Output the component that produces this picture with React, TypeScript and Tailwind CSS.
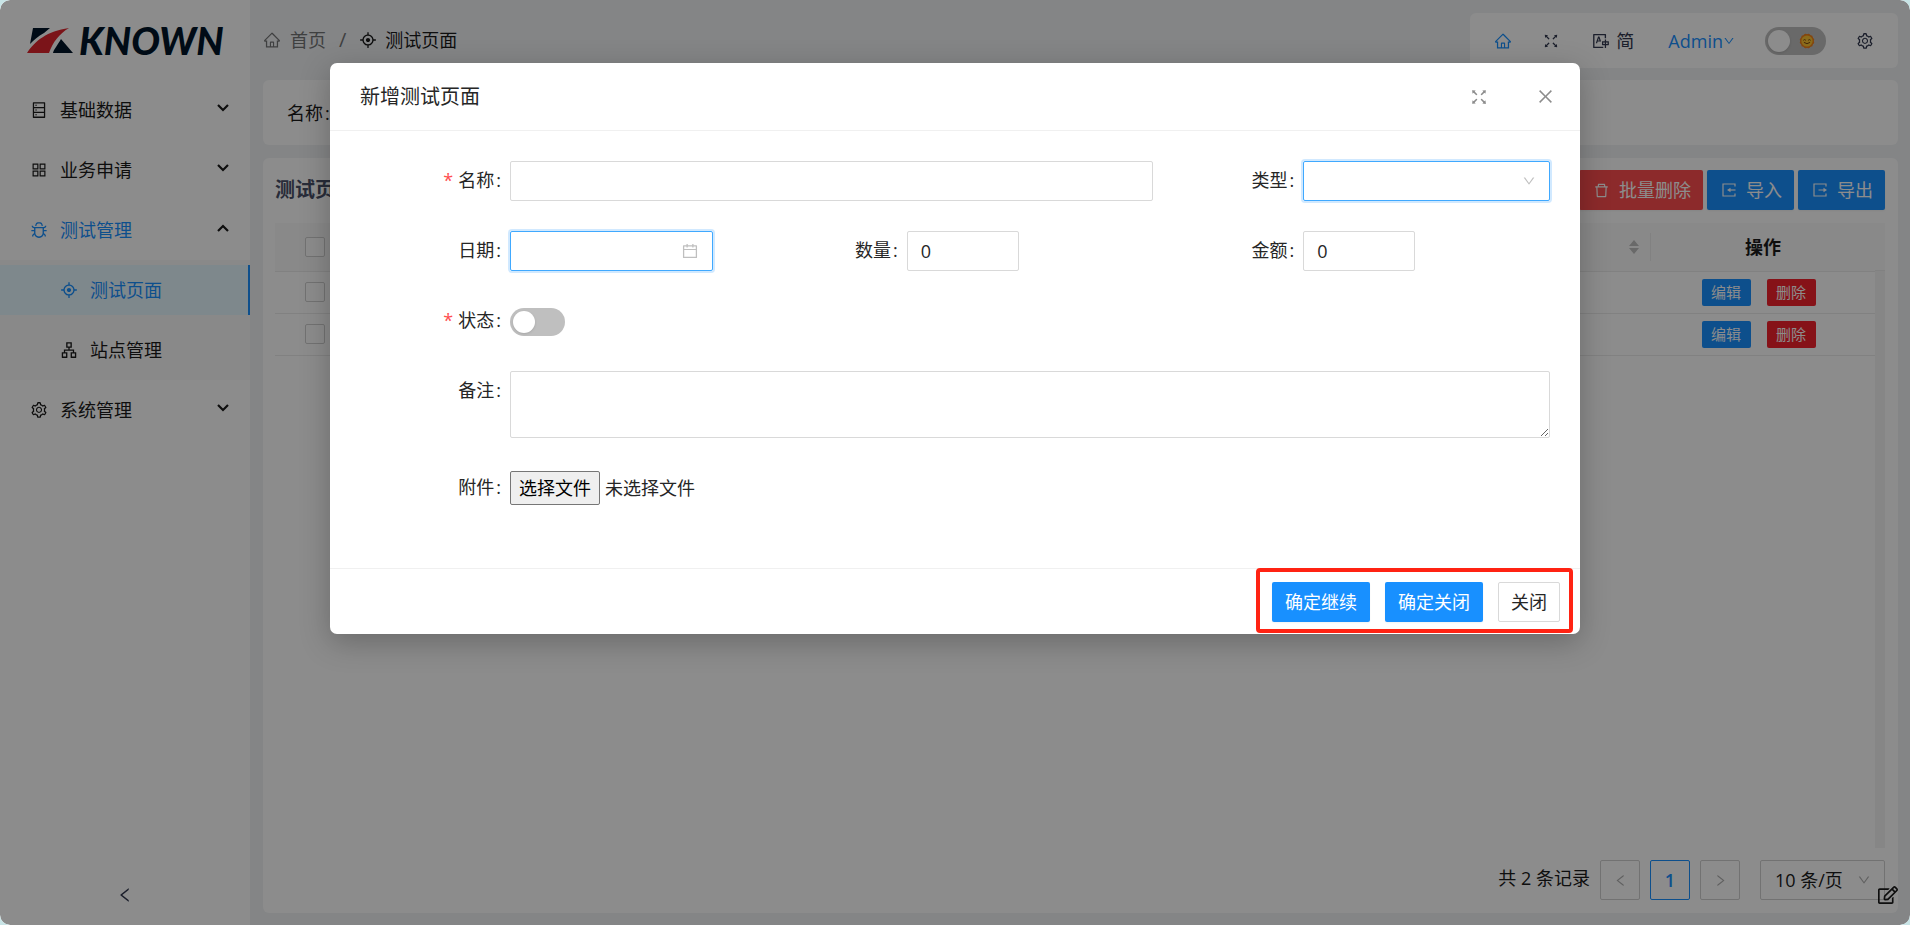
import type { ReactNode } from "react";
import {
  AiOutlineAim,
  AiOutlineApartment,
  AiOutlineAppstore,
  AiOutlineBug,
  AiOutlineCalendar,
  AiOutlineClose,
  AiOutlineDatabase,
  AiOutlineDelete,
  AiOutlineDown,
  AiOutlineFullscreen,
  AiOutlineHome,
  AiOutlineLeft,
  AiOutlineRight,
  AiOutlineSetting,
  AiOutlineTranslation,
} from "react-icons/ai";
import { FaRegEdit } from "react-icons/fa";

function Logo() {
  return (
    <a href="#" className="flex h-20 items-center gap-[6px] pl-[27px] text-[#001529]" aria-label="KNOWN">
      <svg width="46" height="27" viewBox="0 0 46 27" aria-hidden="true">
        <path d="M6 1H23L17 6C11 9 7 13 3 17Z" fill="#001529" />
        <path d="M0 26C8 14 20 4 42 1C32 7 26 15 22 26Z" fill="#e0262e" />
        <path d="M34 12L46 26H26C27 22 30 19 34 12Z" fill="#001529" />
      </svg>
      <span className="font-['Lato'] text-[38px] leading-10 font-black italic">KNOWN</span>
    </a>
  );
}

function Chevron({ up = false }: { up?: boolean }) {
  return (
    <svg className="ml-auto mb-1" width="12" height="8" viewBox="0 0 12 8" fill="none" stroke="currentColor" strokeWidth="2.2" aria-hidden="true">
      <path d={up ? "M1 7L6 2L11 7" : "M1 1L6 6L11 1"} />
    </svg>
  );
}

function TransferIcon({ out = false }: { out?: boolean }) {
  return (
    <svg width="16" height="16" viewBox="0 0 16 16" fill="none" stroke="currentColor" strokeWidth="1.2" aria-hidden="true">
      <path d="M14 4.5V2H2V14H14V11.5" />
      <path d={out ? "M6.5 8H13" : "M8 8H14.5"} />
      <path d={out ? "M11.5 5.8L15 8L11.5 10.2Z" : "M9.5 5.8L6 8L9.5 10.2Z"} fill="currentColor" stroke="none" />
    </svg>
  );
}

function MenuGroup({ icon, label, open = false }: { icon: ReactNode; label: string; open?: boolean }) {
  return (
    <button type="button" className="flex h-[60px] w-full items-center pr-[21px] pl-[30px] text-[#1a1a1a]">
      <span className={open ? "flex items-center gap-3 text-[#1890ff]" : "flex items-center gap-3"}>
        {icon}
        {label}
      </span>
      <Chevron up={open} />
    </button>
  );
}

function Sidebar() {
  return (
    <nav className="flex w-[250px] shrink-0 flex-col bg-white">
      <Logo />
      <MenuGroup icon={<AiOutlineDatabase size={18} />} label="基础数据" />
      <MenuGroup icon={<AiOutlineAppstore size={18} />} label="业务申请" />
      <MenuGroup icon={<AiOutlineBug size={18} />} label="测试管理" open />
      <div className="bg-[#fafafa] py-[5px]">
        <a href="#" className="flex h-[50px] items-center gap-3 border-r-2 border-[#1890ff] bg-[#e6f7ff] pl-[60px] text-[#1890ff]">
          <AiOutlineAim size={18} />
          测试页面
        </a>
        <a href="#" className="mt-[10px] flex h-[50px] items-center gap-3 pl-[60px] text-[#1a1a1a]">
          <AiOutlineApartment size={18} />
          站点管理
        </a>
      </div>
      <MenuGroup icon={<AiOutlineSetting size={18} />} label="系统管理" />
      <button type="button" aria-label="收起菜单" className="mt-auto flex h-[60px] items-center justify-center text-[#333a50]">
        <AiOutlineLeft size={18} />
      </button>
    </nav>
  );
}

function SunFace() {
  return (
    <svg width="16" height="16" viewBox="0 0 16 16" aria-hidden="true">
      <g fill="#f0801a">
        <rect x="2.2" y="2.2" width="11.6" height="11.6" rx="2" />
        <rect x="2.2" y="2.2" width="11.6" height="11.6" rx="2" transform="rotate(30 8 8)" />
        <rect x="2.2" y="2.2" width="11.6" height="11.6" rx="2" transform="rotate(60 8 8)" />
      </g>
      <circle cx="8" cy="8" r="5.6" fill="#fcc332" />
      <g fill="none" stroke="#7a4a12" strokeWidth="1" strokeLinecap="round">
        <path d="M4.6 7Q5.6 5.8 6.6 7M9.4 7Q10.4 5.8 11.4 7M5.2 9.6Q8 12 10.8 9.6" />
      </g>
    </svg>
  );
}

function TopBar() {
  return (
    <header className="flex h-[55px] items-center justify-between">
      <ol className="flex items-center pb-[2px]" aria-label="导航">
        <li className="flex items-center gap-[9px] text-[#747576]">
          <AiOutlineHome size={18} />
          首页
        </li>
        <li className="px-[13px] text-xl leading-6 text-[#747576]" aria-hidden="true">
          /
        </li>
        <li className="flex items-center gap-2 text-[#1a1a1a]">
          <AiOutlineAim size={18} />
          测试页面
        </li>
      </ol>
      <div className="flex h-full items-center rounded-md bg-white px-2 text-[#333a50]">
        <button type="button" aria-label="主页" className="px-4 text-[#1890ff]">
          <AiOutlineHome size={18} />
        </button>
        <button type="button" aria-label="全屏" className="px-[14px]">
          <AiOutlineFullscreen size={18} />
        </button>
        <button type="button" className="flex items-center gap-[6px] px-[18px]">
          <AiOutlineTranslation size={18} />
          简
        </button>
        <button type="button" className="flex items-center px-4 text-[#1890ff]">
          Admin
          <AiOutlineDown size={12} />
        </button>
        <button type="button" role="switch" aria-checked="false" aria-label="主题" className="mx-[14px] flex h-7 w-[61px] items-center justify-between rounded-full bg-[#bfbfbf] pr-[11px] pl-[3px]">
          <span className="size-[22px] rounded-full bg-white shadow" />
          <SunFace />
        </button>
        <button type="button" aria-label="设置" className="px-4">
          <AiOutlineSetting size={18} />
        </button>
      </div>
    </header>
  );
}

function Tick({ label }: { label: string }) {
  return (
    <input type="checkbox" aria-label={label} className="block size-5 appearance-none rounded-xs border border-[#d0d0d0] bg-white" />
  );
}

function DataTable() {
  return (
    <div className="mt-[13px] flex grow">
      <div className="min-w-0 flex-1">
        <table className="w-full table-fixed border-collapse">
          <thead>
            <tr className="h-12 border-b border-[#ececec] bg-[#fafafa]">
              <th className="w-[60px] pl-[30px]">
                <Tick label="全选" />
              </th>
              <th className="pr-[11px]">
                <svg className="ml-auto" width="10" height="16" viewBox="0 0 10 16" fill="#bfbfbf" aria-hidden="true">
                  <path d="M5 1L10 7H0ZM5 15L0 9H10Z" />
                </svg>
              </th>
              <th className="w-[225px] font-bold text-[#1a1a1a]">
                <div className="flex h-7 items-center justify-center border-l border-[#ececec]">操作</div>
              </th>
            </tr>
          </thead>
          <tbody>
            {[1, 2].map((row) => (
              <tr key={row} className="h-[42px] border-b border-[#ececec]">
                <td className="pl-[30px]">
                  <Tick label={`选择第${row}行`} />
                </td>
                <td />
                <td>
                  <div className="flex justify-center gap-4 pr-2 text-[15px] leading-5 text-white">
                    <button type="button" className="h-[27px] w-[49px] rounded-xs bg-[#1890ff]">
                      编辑
                    </button>
                    <button type="button" className="h-[27px] w-[49px] rounded-xs bg-[#f5222d]">
                      删除
                    </button>
                  </div>
                </td>
              </tr>
            ))}
          </tbody>
        </table>
      </div>
      <div className="flex w-[10px] shrink-0 flex-col">
        <div className="h-12 border-b border-[#ececec] bg-[#fafafa]" />
        <div className="grow bg-[#f5f5f5]" />
      </div>
    </div>
  );
}

function Pagination() {
  return (
    <div className="mt-3 flex items-center justify-end text-[#1a1a1a]">
      <span className="mr-[10px] pb-1">共 2 条记录</span>
      <div className="mr-5 flex gap-[10px]">
        <button type="button" aria-label="上一页" className="flex size-10 items-center justify-center rounded-xs border border-[#d0d0d0] text-[#b0b0b0]">
          <AiOutlineLeft size={15} />
        </button>
        <button type="button" className="size-10 rounded-xs border border-[#1890ff] font-semibold text-[#1890ff]">
          1
        </button>
        <button type="button" aria-label="下一页" className="flex size-10 items-center justify-center rounded-xs border border-[#d0d0d0] text-[#b0b0b0]">
          <AiOutlineRight size={15} />
        </button>
      </div>
      <div className="relative">
        <select aria-label="每页条数" className="block h-10 w-[125px] appearance-none rounded-xs border border-[#d0d0d0] pl-[14px]">
          <option>10 条/页</option>
        </select>
        <AiOutlineDown size={14} className="pointer-events-none absolute top-[13px] right-[14px] text-[#b0b0b0]" />
      </div>
    </div>
  );
}

function ListPage() {
  return (
    <main className="flex grow flex-col bg-[#f0f2f5] pt-[13px] pr-3 pb-3 pl-[13px]">
      <TopBar />
      <section className="mt-3 flex h-[65px] shrink-0 items-center rounded-md bg-white pl-6">
        <label htmlFor="query-name" className="flex gap-[2px] text-[#1a1a1a]">
          名称<span>:</span>
        </label>
        <input id="query-name" className="ml-[9px] h-10 w-[200px] rounded-xs border border-[#d9d9d9] px-3" />
      </section>
      <section className="mt-[13px] flex grow flex-col rounded-md bg-white pt-3 pr-[13px] pb-[13px] pl-3">
        <div className="flex items-center gap-1 text-white">
          <h1 className="mr-auto text-xl leading-7 font-bold text-[#4a5068]">测试页面</h1>
          <button type="button" className="flex h-10 items-center gap-[9px] rounded-xs bg-[#ff4d4f] pr-3 pl-[14px] shadow-xs">
            <AiOutlineDelete size={17} />
            批量删除
          </button>
          <button type="button" className="flex h-10 items-center gap-[9px] rounded-xs bg-[#1890ff] pr-3 pl-[14px] shadow-xs">
            <TransferIcon />
            导入
          </button>
          <button type="button" className="flex h-10 items-center gap-[9px] rounded-xs bg-[#1890ff] pr-3 pl-[14px] shadow-xs">
            <TransferIcon out />
            导出
          </button>
        </div>
        <DataTable />
        <Pagination />
      </section>
    </main>
  );
}

function Field({ id, label, required = false, span = "", children }: { id: string; label: string; required?: boolean; span?: string; children: ReactNode }) {
  return (
    <div className={`flex items-start ${span}`}>
      <label htmlFor={id} className="flex h-10 w-[150px] shrink-0 items-center justify-end gap-[2px] pr-[9px] pb-[2px] text-[#262626]">
        {required && <span className="mr-[3px] text-[#ff4d4f]">*</span>}
        {label}
        <span>:</span>
      </label>
      {children}
    </div>
  );
}

function EditDialog() {
  return (
    <section role="dialog" aria-labelledby="dialog-title" className="mt-[63px] w-full max-w-[1250px] rounded-[7px] bg-white shadow-[0_8px_30px_rgba(0,0,0,0.25)]">
      <div className="flex h-[68px] items-center border-b border-[#f0f0f0] pr-[25px] pl-[30px] text-[#8c8c8c]">
        <h2 id="dialog-title" className="mr-auto text-xl leading-7 text-[#262626]">
          新增测试页面
        </h2>
        <button type="button" aria-label="最大化" className="mr-[47px]">
          <AiOutlineFullscreen size={20} />
        </button>
        <button type="button" aria-label="关闭窗口">
          <AiOutlineClose size={19} />
        </button>
      </div>
      <form id="edit-form" className="grid grid-cols-3 gap-y-[30px] px-[30px] pt-[30px] pb-[60px]">
        <Field id="name" label="名称" required span="col-span-2">
          <input id="name" className="h-10 w-full rounded-xs border border-[#d9d9d9] px-3" />
        </Field>
        <Field id="type" label="类型">
          <div className="relative grow">
            <select id="type" className="block h-10 w-full appearance-none rounded-xs border border-[#40a9ff] px-3 ring-2 ring-[#1890ff]/20">
              <option />
            </select>
            <AiOutlineDown size={14} className="pointer-events-none absolute top-[13px] right-[14px] text-[#bfbfbf]" />
          </div>
        </Field>
        <Field id="date" label="日期">
          <div className="relative">
            <input id="date" className="block h-10 w-[203px] rounded-xs border border-[#40a9ff] px-3 ring-2 ring-[#1890ff]/20" />
            <AiOutlineCalendar size={18} className="pointer-events-none absolute top-[11px] right-[14px] text-[#bfbfbf]" />
          </div>
        </Field>
        <Field id="count" label="数量">
          <input id="count" inputMode="numeric" defaultValue="0" className="h-10 w-[112px] rounded-xs border border-[#d9d9d9] px-[13px] text-[#262626]" />
        </Field>
        <Field id="amount" label="金额">
          <input id="amount" inputMode="decimal" defaultValue="0" className="h-10 w-[112px] rounded-xs border border-[#d9d9d9] px-[13px] text-[#262626]" />
        </Field>
        <Field id="status" label="状态" required span="col-span-3">
          <button id="status" type="button" role="switch" aria-checked="false" className="mt-[7px] flex h-7 w-[55px] items-center rounded-full bg-[#bfbfbf] px-[3px]">
            <span className="size-[22px] rounded-full bg-white shadow" />
          </button>
        </Field>
        <Field id="remark" label="备注" span="col-span-3">
          <textarea id="remark" className="block h-[67px] w-full rounded-xs border border-[#d9d9d9] px-3" />
        </Field>
        <Field id="file" label="附件" span="col-span-3">
          <label className="flex h-10 items-center gap-[5px] text-[#262626]">
            <input id="file" type="file" className="sr-only" />
            <span className="flex h-[34px] items-center rounded-xs border border-[#767676] bg-[#efefef] px-2 text-black">选择文件</span>
            未选择文件
          </label>
        </Field>
      </form>
      <div className="relative flex h-[66px] items-center justify-end gap-[15px] border-t border-[#f0f0f0] pr-5">
        <button type="submit" form="edit-form" className="h-10 rounded-xs bg-[#1890ff] px-[13px] text-white shadow-xs">
          确定继续
        </button>
        <button type="submit" form="edit-form" className="h-10 rounded-xs bg-[#1890ff] px-[13px] text-white shadow-xs">
          确定关闭
        </button>
        <button type="button" className="h-10 rounded-xs border border-[#d9d9d9] px-3 text-[#262626]">
          关闭
        </button>
        <div className="pointer-events-none absolute -top-px right-[7px] h-[65px] w-[317px] rounded-sm border-4 border-[#ff2313]" />
      </div>
    </section>
  );
}

export default function App() {
  return (
    <div className="h-screen bg-[#c8e4e6] font-['Open_Sans','Noto_Sans_CJK_SC',sans-serif] text-lg leading-6">
      <div className="relative flex h-full overflow-hidden rounded-[10px]">
        <Sidebar />
        <ListPage />
        <button type="button" aria-label="编辑页面" className="absolute right-3 bottom-5 text-[#1a1a1a]">
          <FaRegEdit size={20} />
        </button>
        <div className="absolute inset-0 flex items-start justify-center rounded-[10px] bg-black/45">
          <EditDialog />
        </div>
      </div>
    </div>
  );
}
